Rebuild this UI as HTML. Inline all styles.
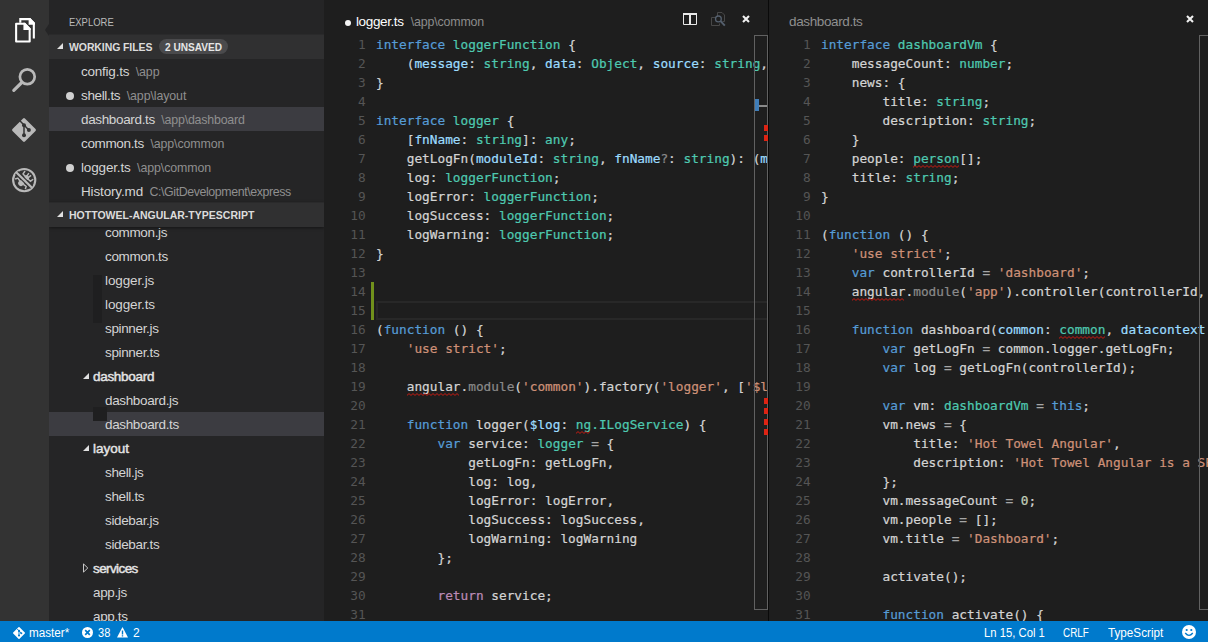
<!DOCTYPE html>
<html lang="en">
<head>
<meta charset="utf-8">
<title>logger.ts - hottowel-angular-typescript</title>
<style>
*{box-sizing:border-box;margin:0;padding:0}
html,body{width:1208px;height:642px;overflow:hidden;background:#1e1e1e}
body{position:relative;font-family:"Liberation Sans",sans-serif;font-size:13px;color:#cccccc}
.abs{position:absolute}
#act{left:0;top:0;width:49px;height:621px;background:#333333}
#side{left:49px;top:0;width:275px;height:621px;background:#252526;overflow:hidden}
#notch{left:45px;top:24px;width:0;height:0;border-top:6px solid transparent;border-bottom:6px solid transparent;border-right:4px solid #252526}
.ttl{left:20px;top:16px;font-size:11px;color:#bbbbbb;line-height:13px;transform:scaleX(0.86);transform-origin:0 0}
.hdr{left:0;width:275px;height:25px;border-top:1px solid #2a2a2b;background:#303031;font-weight:bold;font-size:10.5px;color:#dcdcdc;line-height:24px;white-space:nowrap}
.hdr .tw{position:absolute;left:7.5px;top:8.3px}
.hdr .tx{position:absolute;left:20px;top:0}
.badge{position:absolute;left:110px;top:4px;height:15px;width:69px;text-align:center;line-height:17px;border-radius:8px;background:#4a4a4c;color:#e6e6e6;font-size:10.1px;font-weight:bold}
.row{left:0;width:275px;height:24px;line-height:24px;white-space:nowrap;color:#d4d4d4;font-size:13px}
.row.sel{background:#3c3c41}
.row .nm{position:absolute;top:1px;transform-origin:0 50%;font-size:13.5px;letter-spacing:-0.35px}
.row .pt{color:#8f8f8f;font-size:12.4px;letter-spacing:-0.1px;margin-left:6.5px}
.row .dot{position:absolute;left:17px;top:9px;width:8px;height:8px;border-radius:4px;background:#d0d0d0}
.fold{color:#e4e4e4;-webkit-text-stroke:0.45px}
#tree{left:0;top:227px;width:275px;height:394px;overflow:hidden}
.ed{top:0;height:621px;background:#1e1e1e;overflow:hidden}
#ed1{left:324px;width:444px}
#ed2{left:769px;width:439px}
#div1{left:768px;top:0;width:1px;height:621px;background:#0a0a0a}
.etitle{top:10px;height:24px;line-height:24px;white-space:nowrap;font-size:13.5px;letter-spacing:-0.38px}
.etitle .pt{color:#8c8c8c;font-size:12.4px;letter-spacing:-0.15px;margin-left:7px}
.code{left:0;top:35px;width:2000px;font-family:"DejaVu Sans Mono","Liberation Mono",monospace;font-size:12.77px;color:#d4d4d4;-webkit-text-stroke:0.22px}
.ln{height:19px;line-height:19px;white-space:pre}
.no{display:inline-block;text-align:right;color:#555555;-webkit-text-stroke:0}
#ed1 .no{width:41.7px;margin-right:10.3px}
#ed2 .no{width:41.7px;margin-right:10.3px}
.k{color:#569cd6}.t{color:#4ec9b0}.tsq{color:#4ec9b0}.p{color:#9cdcfe}.s{color:#ce9178}.g{color:#8a8a8a}.r{color:#bb8ab6}.n{color:#c4d2bc}.o{color:#a6a6a6}
.sq,.tsq{position:relative}
.wv{position:absolute;left:0;top:14px}
.ruler{top:35px;width:14px;height:575px;border:1px solid #616161}
#status{left:0;top:621px;width:1208px;height:21px;background:#007acc;color:#ffffff;font-size:12px;line-height:21px;white-space:nowrap}
#status span{position:absolute;top:2px;transform-origin:0 50%}
</style>
</head>
<body>
<!-- activity bar -->
<div id="act" class="abs">
  <svg class="abs" style="left:12.6px;top:15.6px" width="25" height="29.2" viewBox="0 0 24 28">
    <path d="M7 6.5 V3 H16 L20 7 V20.5 H19" fill="none" stroke="#ffffff" stroke-width="2" stroke-linejoin="miter"/>
    <path d="M15 2 H16.6 L21 6.4 V8.5 H15 Z" fill="#ffffff"/>
    <path d="M3 7.5 H11 L16 12.5 V24.5 H3 Z" fill="none" stroke="#ffffff" stroke-width="2" stroke-linejoin="round"/>
    <path d="M10 6.5 H11.6 L17 11.9 V13.5 H10 Z" fill="#ffffff"/>
  </svg>
  <svg class="abs" style="left:10px;top:66px" width="28" height="28" viewBox="0 0 28 28">
    <circle cx="17.3" cy="10.8" r="7.4" fill="none" stroke="#b9b9b9" stroke-width="2.7"/>
    <path d="M11.8 16.5 L3.8 24.3" stroke="#b9b9b9" stroke-width="3.2" stroke-linecap="round"/>
  </svg>
  <svg class="abs" style="left:10px;top:116px" width="28" height="28" viewBox="0 0 28 28">
    <rect x="5.2" y="5.2" width="17.6" height="17.6" rx="1.3" transform="rotate(45 14 14)" fill="#b9b9b9"/>
    <path d="M9.6 4.4 L14 9 L18.8 14 M14 9 V19" stroke="#333333" stroke-width="1.5" fill="none"/>
    <circle cx="14" cy="9.2" r="2" fill="#333333"/><circle cx="14" cy="19.2" r="2" fill="#333333"/><circle cx="18.9" cy="14.1" r="2" fill="#333333"/>
  </svg>
  <svg class="abs" style="left:10px;top:166px" width="28" height="28" viewBox="0 0 28 28">
    <g transform="translate(14.2 14.1)">
      <circle cx="0" cy="0" r="11.1" fill="none" stroke="#b9b9b9" stroke-width="2.1"/>
      <g transform="rotate(45)" stroke="#b9b9b9" stroke-width="1.5" fill="none">
        <ellipse cx="0" cy="4.2" rx="2.9" ry="3.1" fill="#b9b9b9" stroke="none"/>
        <ellipse cx="0" cy="-3.6" rx="2.6" ry="2.2" fill="#b9b9b9" stroke="none"/>
        <path d="M-1.5 -3.4 L-5.2 -3.6 L-5.8 -7 M1.5 -3.4 L5.2 -3.6 L5.8 -7 M-1 -5 L-1.6 -8.2 M1 -5 L1.6 -8.2 M-2.4 3.6 L-5.8 3 L-7.2 5.6 M2.4 3.6 L5.8 3 L7.2 5.6"/>
      </g>
      <path d="M-7.6 -7.4 L7.4 7.2" stroke="#333333" stroke-width="4.4"/>
      <path d="M-8 -7.8 L7.8 7.6" stroke="#b9b9b9" stroke-width="2.3"/>
    </g>
  </svg>
</div>
<div id="notch" class="abs"></div>

<!-- sidebar -->
<div id="side" class="abs">
  <div class="abs ttl">EXPLORE</div>
  <div class="abs hdr" style="top:34px">
    <svg class="tw" width="6" height="6" viewBox="0 0 6 6"><path d="M6 0 V6 H0 Z" fill="#e0e0e0"/></svg>
    <span class="tx" style="letter-spacing:-0.1px">WORKING FILES</span><span class="badge">2 UNSAVED</span>
  </div>
  <div class="abs row" style="top:59px"><span class="nm" style="left:32px;letter-spacing:-0.23px">config.ts<span class="pt">\app</span></span></div>
  <div class="abs row" style="top:83px"><i class="dot"></i><span class="nm" style="left:32px">shell.ts<span class="pt">\app\layout</span></span></div>
  <div class="abs row sel" style="top:107px"><span class="nm" style="left:32px">dashboard.ts<span class="pt" style="letter-spacing:-0.2px">\app\dashboard</span></span></div>
  <div class="abs row" style="top:131px"><span class="nm" style="left:32px">common.ts<span class="pt">\app\common</span></span></div>
  <div class="abs row" style="top:155px"><i class="dot"></i><span class="nm" style="left:32px;letter-spacing:-0.16px">logger.ts<span class="pt">\app\common</span></span></div>
  <div class="abs row" style="top:179px"><span class="nm" style="left:32px;letter-spacing:-0.15px">History.md<span class="pt" style="letter-spacing:-0.41px">C:\GitDevelopment\express</span></span></div>

  <div id="tree" class="abs">
    <div class="abs row" style="top:-7px"><span class="nm" style="left:56px">common.js</span></div>
    <div class="abs row" style="top:17px"><span class="nm" style="left:56px">common.ts</span></div>
    <div class="abs row" style="top:41px"><span class="nm" style="left:56px;letter-spacing:-0.12px">logger.js</span></div>
    <div class="abs row" style="top:65px"><span class="nm" style="left:56px;letter-spacing:-0.12px">logger.ts</span></div>
    <div class="abs row" style="top:89px"><span class="nm" style="left:56px">spinner.js</span></div>
    <div class="abs row" style="top:113px"><span class="nm" style="left:56px">spinner.ts</span></div>
    <div class="abs row fold" style="top:137px"><svg class="abs" style="left:34px;top:9px" width="6" height="6" viewBox="0 0 6 6"><path d="M6 0 V6 H0 Z" fill="#e0e0e0"/></svg><span class="nm" style="left:44px;letter-spacing:-0.3px">dashboard</span></div>
    <div class="abs row" style="top:161px"><span class="nm" style="left:56px">dashboard.js</span></div>
    <div class="abs row sel" style="top:185px"><span class="nm" style="left:56px">dashboard.ts</span></div>
    <div class="abs row fold" style="top:209px"><svg class="abs" style="left:34px;top:9px" width="6" height="6" viewBox="0 0 6 6"><path d="M6 0 V6 H0 Z" fill="#e0e0e0"/></svg><span class="nm" style="left:44px;letter-spacing:0px">layout</span></div>
    <div class="abs row" style="top:233px"><span class="nm" style="left:56px">shell.js</span></div>
    <div class="abs row" style="top:257px"><span class="nm" style="left:56px">shell.ts</span></div>
    <div class="abs row" style="top:281px"><span class="nm" style="left:56px">sidebar.js</span></div>
    <div class="abs row" style="top:305px"><span class="nm" style="left:56px">sidebar.ts</span></div>
    <div class="abs row fold" style="top:329px"><svg class="abs" style="left:34px;top:7px" width="6" height="10" viewBox="0 0 6 10"><path d="M0.5 0.9 L4.8 5 L0.5 9.1 Z" fill="none" stroke="#c8c8c8" stroke-width="1"/></svg><span class="nm" style="left:44px;letter-spacing:-0.6px">services</span></div>
    <div class="abs row" style="top:353px"><span class="nm" style="left:44px">app.js</span></div>
    <div class="abs row" style="top:377px"><span class="nm" style="left:44px">app.ts</span></div>
    <div class="abs" style="left:44px;top:48px;width:9px;height:48px;background:#1f1f20"></div>
    <div class="abs" style="left:44px;top:180px;width:14px;height:14px;background:#1f1f20"></div>
  </div>
  <div class="abs hdr" style="top:202px;box-shadow:0 1px 3px rgba(0,0,0,0.45)">
    <svg class="tw" width="6" height="6" viewBox="0 0 6 6"><path d="M6 0 V6 H0 Z" fill="#e0e0e0"/></svg>
    <span class="tx">HOTTOWEL-ANGULAR-TYPESCRIPT</span>
  </div>
</div>

<!-- editor 1 -->
<div id="ed1" class="abs ed">
  <div class="abs" style="left:21px;top:20px;width:6px;height:6px;border-radius:3px;background:#f4f4f4"></div>
  <div class="abs etitle" style="left:32px;color:#ffffff">logger.ts<span class="pt">\app\common</span></div>
  <div class="abs code">
    <div class="abs" style="left:52px;top:266px;width:1000px;height:19px;border:2px solid #282828;border-right:0"></div>
    <div class="abs" style="left:47px;top:247px;width:3px;height:38px;background:#71911c"></div>
<div class="ln"><span class="no">1</span><span class="cd"><span class="k">interface</span> <span class="t">loggerFunction</span> {</span></div>
<div class="ln"><span class="no">2</span><span class="cd">    (<span class="p">message</span>: <span class="t">string</span>, <span class="p">data</span>: <span class="t">Object</span>, <span class="p">source</span>: <span class="t">string</span>, <span class="p">showToast</span>?: <span class="t">boolean</span>): <span class="t">void</span>;</span></div>
<div class="ln"><span class="no">3</span><span class="cd">}</span></div>
<div class="ln"><span class="no">4</span><span class="cd"></span></div>
<div class="ln"><span class="no">5</span><span class="cd"><span class="k">interface</span> <span class="t">logger</span> {</span></div>
<div class="ln"><span class="no">6</span><span class="cd">    [<span class="p">fnName</span>: <span class="t">string</span>]: <span class="t">any</span>;</span></div>
<div class="ln"><span class="no">7</span><span class="cd">    getLogFn(<span class="p">moduleId</span>: <span class="t">string</span>, <span class="p">fnName</span><span class="g">?</span>: <span class="t">string</span>): (<span class="p">message</span>: <span class="t">string</span>) =&gt; <span class="t">void</span>;</span></div>
<div class="ln"><span class="no">8</span><span class="cd">    log: <span class="t">loggerFunction</span>;</span></div>
<div class="ln"><span class="no">9</span><span class="cd">    logError: <span class="t">loggerFunction</span>;</span></div>
<div class="ln"><span class="no">10</span><span class="cd">    logSuccess: <span class="t">loggerFunction</span>;</span></div>
<div class="ln"><span class="no">11</span><span class="cd">    logWarning: <span class="t">loggerFunction</span>;</span></div>
<div class="ln"><span class="no">12</span><span class="cd">}</span></div>
<div class="ln"><span class="no">13</span><span class="cd"></span></div>
<div class="ln"><span class="no">14</span><span class="cd"></span></div>
<div class="ln"><span class="no">15</span><span class="cd"></span></div>
<div class="ln"><span class="no">16</span><span class="cd">(<span class="k">function</span> () {</span></div>
<div class="ln"><span class="no">17</span><span class="cd">    <span class="s">'use strict'</span>;</span></div>
<div class="ln"><span class="no">18</span><span class="cd"></span></div>
<div class="ln"><span class="no">19</span><span class="cd">    <span class="sq">angular<svg class="wv" width="53.8" height="3" viewBox="0 0 53.8 3"><path d="M0 2.4 L2 0.6 L4 2.4 L6 0.6 L8 2.4 L10 0.6 L12 2.4 L14 0.6 L16 2.4 L18 0.6 L20 2.4 L22 0.6 L24 2.4 L26 0.6 L28 2.4 L30 0.6 L32 2.4 L34 0.6 L36 2.4 L38 0.6 L40 2.4 L42 0.6 L44 2.4 L46 0.6 L48 2.4 L50 0.6 L52 2.4" fill="none" stroke="#d81c12" stroke-width="0.9"/></svg></span>.<span class="g">module</span>(<span class="s">'common'</span>).factory(<span class="s">'logger'</span>, [<span class="s">'$log'</span>, logger]);</span></div>
<div class="ln"><span class="no">20</span><span class="cd"></span></div>
<div class="ln"><span class="no">21</span><span class="cd">    <span class="k">function</span> logger(<span class="p">$log</span>: <span class="tsq">ng<svg class="wv" width="15.4" height="3" viewBox="0 0 15.4 3"><path d="M0 2.4 L2 0.6 L4 2.4 L6 0.6 L8 2.4 L10 0.6 L12 2.4 L14 0.6" fill="none" stroke="#d81c12" stroke-width="0.9"/></svg></span><span class="t">.ILogService</span>) {</span></div>
<div class="ln"><span class="no">22</span><span class="cd">        <span class="k">var</span> service: <span class="t">logger</span> <span class="o">=</span> {</span></div>
<div class="ln"><span class="no">23</span><span class="cd">            getLogFn: getLogFn,</span></div>
<div class="ln"><span class="no">24</span><span class="cd">            log: log,</span></div>
<div class="ln"><span class="no">25</span><span class="cd">            logError: logError,</span></div>
<div class="ln"><span class="no">26</span><span class="cd">            logSuccess: logSuccess,</span></div>
<div class="ln"><span class="no">27</span><span class="cd">            logWarning: logWarning</span></div>
<div class="ln"><span class="no">28</span><span class="cd">        };</span></div>
<div class="ln"><span class="no">29</span><span class="cd"></span></div>
<div class="ln"><span class="no">30</span><span class="cd">        <span class="r">return</span> service;</span></div>
<div class="ln"><span class="no">31</span><span class="cd"></span></div>

  </div>
  <div class="abs ruler" style="left:430px">
    <div class="abs" style="left:0;top:63px;width:4px;height:12px;background:#3f7db8"></div>
    <div class="abs" style="left:4px;top:69px;width:8px;height:2px;background:#8a8a8a"></div>
    <div class="abs" style="left:9px;top:89px;width:4px;height:6px;background:#dc2414"></div>
    <div class="abs" style="left:9px;top:99px;width:4px;height:6px;background:#dc2414"></div>
    <div class="abs" style="left:9px;top:362px;width:4px;height:6px;background:#dc2414"></div>
    <div class="abs" style="left:9px;top:372px;width:4px;height:6px;background:#dc2414"></div>
    <div class="abs" style="left:9px;top:383px;width:4px;height:6px;background:#dc2414"></div>
    <div class="abs" style="left:9px;top:393px;width:4px;height:6px;background:#dc2414"></div>
  </div>
  <!-- title actions -->
  <svg class="abs" style="left:359px;top:13px" width="14" height="12" viewBox="0 0 14 12"><path d="M0.5 0.5 H13.5 V11.5 H0.5 Z" fill="none" stroke="#e8e8e8" stroke-width="1"/><path d="M0 0 H14 V2 H0 Z M6 2 H8 V12 H6 Z" fill="#e8e8e8"/></svg>
  <svg class="abs" style="left:387px;top:12px" width="15" height="15" viewBox="0 0 15 15"><path d="M6.5 5 V0.5 H11 L13.5 3 V9.5 H11.5 M0.5 5.5 H4.5 M0.5 5.5 V13.5 H8.5 V11.5" fill="none" stroke="#484848" stroke-width="1"/><circle cx="7.4" cy="6.9" r="2.9" fill="#1e1e1e" stroke="#55606e" stroke-width="1.3"/><path d="M9.6 9.2 L13.8 13.6" stroke="#55606e" stroke-width="1.9"/></svg>
  <svg class="abs" style="left:418px;top:15px" width="8" height="8" viewBox="0 0 8 8"><path d="M1 1 L7 7 M7 1 L1 7" stroke="#f0f0f0" stroke-width="2.1"/></svg>
</div>
<div id="div1" class="abs"></div>

<!-- editor 2 -->
<div id="ed2" class="abs ed">
  <div class="abs etitle" style="left:20px;color:#8f8f8f">dashboard.ts</div>
  <div class="abs code">
<div class="ln"><span class="no">1</span><span class="cd"><span class="k">interface</span> <span class="t">dashboardVm</span> {</span></div>
<div class="ln"><span class="no">2</span><span class="cd">    messageCount: <span class="t">number</span>;</span></div>
<div class="ln"><span class="no">3</span><span class="cd">    news: {</span></div>
<div class="ln"><span class="no">4</span><span class="cd">        title: <span class="t">string</span>;</span></div>
<div class="ln"><span class="no">5</span><span class="cd">        description: <span class="t">string</span>;</span></div>
<div class="ln"><span class="no">6</span><span class="cd">    }</span></div>
<div class="ln"><span class="no">7</span><span class="cd">    people: <span class="tsq">person<svg class="wv" width="46.1" height="3" viewBox="0 0 46.1 3"><path d="M0 2.4 L2 0.6 L4 2.4 L6 0.6 L8 2.4 L10 0.6 L12 2.4 L14 0.6 L16 2.4 L18 0.6 L20 2.4 L22 0.6 L24 2.4 L26 0.6 L28 2.4 L30 0.6 L32 2.4 L34 0.6 L36 2.4 L38 0.6 L40 2.4 L42 0.6 L44 2.4 L46 0.6" fill="none" stroke="#d81c12" stroke-width="0.9"/></svg></span>[];</span></div>
<div class="ln"><span class="no">8</span><span class="cd">    title: <span class="t">string</span>;</span></div>
<div class="ln"><span class="no">9</span><span class="cd">}</span></div>
<div class="ln"><span class="no">10</span><span class="cd"></span></div>
<div class="ln"><span class="no">11</span><span class="cd">(<span class="k">function</span> () {</span></div>
<div class="ln"><span class="no">12</span><span class="cd">    <span class="s">'use strict'</span>;</span></div>
<div class="ln"><span class="no">13</span><span class="cd">    <span class="k">var</span> controllerId <span class="o">=</span> <span class="s">'dashboard'</span>;</span></div>
<div class="ln"><span class="no">14</span><span class="cd">    <span class="sq">angular<svg class="wv" width="53.8" height="3" viewBox="0 0 53.8 3"><path d="M0 2.4 L2 0.6 L4 2.4 L6 0.6 L8 2.4 L10 0.6 L12 2.4 L14 0.6 L16 2.4 L18 0.6 L20 2.4 L22 0.6 L24 2.4 L26 0.6 L28 2.4 L30 0.6 L32 2.4 L34 0.6 L36 2.4 L38 0.6 L40 2.4 L42 0.6 L44 2.4 L46 0.6 L48 2.4 L50 0.6 L52 2.4" fill="none" stroke="#d81c12" stroke-width="0.9"/></svg></span>.<span class="g">module</span>(<span class="s">'app'</span>).controller(controllerId, [<span class="s">'common'</span>, dashboard]);</span></div>
<div class="ln"><span class="no">15</span><span class="cd"></span></div>
<div class="ln"><span class="no">16</span><span class="cd">    <span class="k">function</span> dashboard(<span class="p">common</span>: <span class="tsq">common<svg class="wv" width="46.1" height="3" viewBox="0 0 46.1 3"><path d="M0 2.4 L2 0.6 L4 2.4 L6 0.6 L8 2.4 L10 0.6 L12 2.4 L14 0.6 L16 2.4 L18 0.6 L20 2.4 L22 0.6 L24 2.4 L26 0.6 L28 2.4 L30 0.6 L32 2.4 L34 0.6 L36 2.4 L38 0.6 L40 2.4 L42 0.6 L44 2.4 L46 0.6" fill="none" stroke="#d81c12" stroke-width="0.9"/></svg></span>, <span class="p">datacontext</span></span></div>
<div class="ln"><span class="no">17</span><span class="cd">        <span class="k">var</span> getLogFn <span class="o">=</span> common.logger.getLogFn;</span></div>
<div class="ln"><span class="no">18</span><span class="cd">        <span class="k">var</span> log <span class="o">=</span> getLogFn(controllerId);</span></div>
<div class="ln"><span class="no">19</span><span class="cd"></span></div>
<div class="ln"><span class="no">20</span><span class="cd">        <span class="k">var</span> vm: <span class="t">dashboardVm</span> <span class="o">=</span> <span class="k">this</span>;</span></div>
<div class="ln"><span class="no">21</span><span class="cd">        vm.news <span class="o">=</span> {</span></div>
<div class="ln"><span class="no">22</span><span class="cd">            title: <span class="s">'Hot Towel Angular'</span>,</span></div>
<div class="ln"><span class="no">23</span><span class="cd">            description: <span class="s">'Hot Towel Angular is a SPA template for Angular developers.'</span></span></div>
<div class="ln"><span class="no">24</span><span class="cd">        };</span></div>
<div class="ln"><span class="no">25</span><span class="cd">        vm.messageCount <span class="o">=</span> <span class="n">0</span>;</span></div>
<div class="ln"><span class="no">26</span><span class="cd">        vm.people <span class="o">=</span> [];</span></div>
<div class="ln"><span class="no">27</span><span class="cd">        vm.title <span class="o">=</span> <span class="s">'Dashboard'</span>;</span></div>
<div class="ln"><span class="no">28</span><span class="cd"></span></div>
<div class="ln"><span class="no">29</span><span class="cd">        activate();</span></div>
<div class="ln"><span class="no">30</span><span class="cd"></span></div>
<div class="ln"><span class="no">31</span><span class="cd">        <span class="k">function</span> activate() {</span></div>

  </div>
  <div class="abs ruler" style="left:430px"></div>
  <svg class="abs" style="left:417px;top:15px" width="8" height="8" viewBox="0 0 8 8"><path d="M1 1 L7 7 M7 1 L1 7" stroke="#f0f0f0" stroke-width="2.1"/></svg>
</div>

<!-- status bar -->
<div id="status" class="abs">
  <svg class="abs" style="left:12.3px;top:5px" width="14" height="14" viewBox="0 0 14 14"><rect x="2.5" y="2.5" width="9" height="9" rx="0.8" transform="rotate(45 7 7)" fill="#ffffff"/><path d="M4.8 2.6 L7 4.8 L9.2 7.2 M7 4.8 V9.6" stroke="#007acc" stroke-width="0.9" fill="none"/><circle cx="7" cy="4.9" r="1.05" fill="#007acc"/><circle cx="7" cy="9.5" r="1.05" fill="#007acc"/><circle cx="9.3" cy="7.2" r="1.05" fill="#007acc"/></svg>
  <span style="left:29px;transform:scaleX(0.975)">master*</span>
  <svg class="abs" style="left:82px;top:6px" width="11" height="11" viewBox="0 0 11 11"><circle cx="5.5" cy="5.5" r="5.5" fill="#ffffff"/><path d="M3.2 3.2 L7.8 7.8 M7.8 3.2 L3.2 7.8" stroke="#007acc" stroke-width="1.7"/></svg>
  <span style="left:98px;transform:scaleX(0.92)">38</span>
  <svg class="abs" style="left:117px;top:6px" width="11" height="11" viewBox="0 0 11 11"><path d="M5.5 0 L11 10.6 H0 Z" fill="#ffffff"/><path d="M5.5 3.6 V7.4 M5.5 8.2 V9.6" stroke="#007acc" stroke-width="1.4"/></svg>
  <span style="left:133px">2</span>
  <span style="left:984px;transform:scaleX(0.94)">Ln 15, Col 1</span>
  <span style="left:1063px;transform:scaleX(0.825)">CRLF</span>
  <span style="left:1108px;transform:scaleX(0.975)">TypeScript</span>
  <svg class="abs" style="left:1182px;top:4px" width="14" height="14" viewBox="0 0 14 14"><circle cx="7" cy="7" r="7" fill="#ffffff"/><circle cx="4.7" cy="5" r="1.1" fill="#007acc"/><circle cx="9.3" cy="5" r="1.1" fill="#007acc"/><path d="M3.2 8 Q7 12.6 10.8 8" fill="none" stroke="#007acc" stroke-width="1.3"/></svg>
</div>
</body>
</html>
